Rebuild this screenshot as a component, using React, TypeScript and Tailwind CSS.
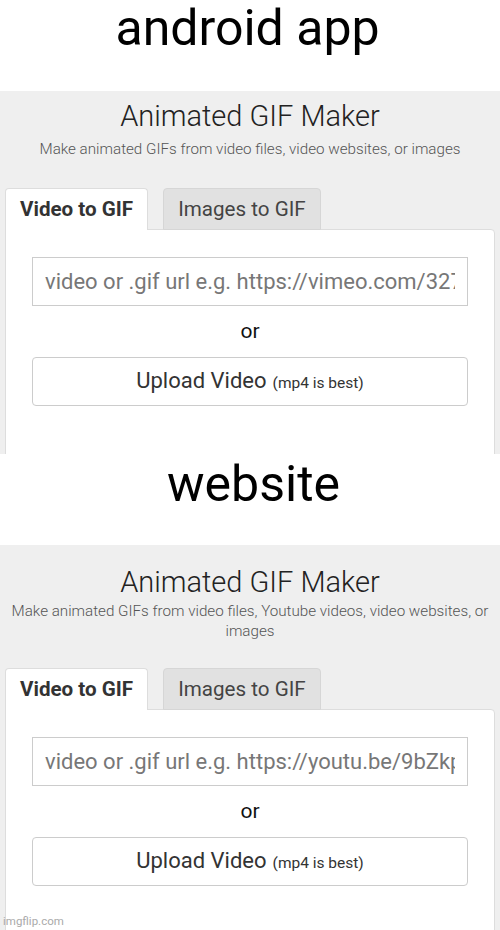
import React from "react";

const font = { fontFamily: "Roboto, 'Noto Sans', sans-serif" };

function Label({ text, pad }: { text: string; pad: string }) {
  return (
    <div className={`h-[91px] bg-white text-center text-[50px] leading-[50px] text-black ${pad}`}>
      {text}
    </div>
  );
}

function Maker({
  subtitle,
  placeholder,
  height,
  pt,
  subMt,
  tabsMt,
}: {
  subtitle: string;
  placeholder: string;
  height: string;
  pt: string;
  subMt: string;
  tabsMt: string;
}) {
  return (
    <section className={`${height} overflow-hidden bg-[#efefef] ${pt}`}>
      <h1 className="text-center text-[29px] font-light leading-[36px] text-[#222]">
        Animated GIF Maker
      </h1>
      <p className={`${subMt} px-[6px] text-center text-[15.2px] font-light leading-[20px] text-[#555]`}>
        {subtitle}
      </p>
      <div className={`${tabsMt} relative z-10 mx-[5px] -mb-px flex h-[42px] gap-[15px]`}>
        <div className="rounded-t-[4px] border border-b-0 border-[#dddddd] bg-white px-[14px] pt-2 text-[20.6px] font-bold leading-[24px] text-[#333]">
          Video to GIF
        </div>
        <div className="rounded-t-[4px] border border-[#d6d6d6] bg-[#e1e1e1] px-[14px] pt-2 text-[20.6px] leading-[24px] text-[#444]">
          Images to GIF
        </div>
      </div>
      <div className="mx-[5px] h-[400px] rounded-tr-[4px] border border-[#dddddd] bg-white px-[26px] pt-[27px]">
        <input
          readOnly
          placeholder={placeholder}
          className="block h-[49px] w-full border border-[#cccccc] bg-white px-[12px] text-[22px] text-[#333] outline-none placeholder:text-[#777]"
        />
        <div className="mt-[13px] text-center text-[21px] leading-[24px] text-[#111]">or</div>
        <div className="mt-[14px] flex h-[49px] items-center justify-center rounded-[4px] border border-[#cccccc] bg-white">
          <span className="flex items-baseline gap-[6px] text-[#333]">
            <span className="text-[22px] leading-[26px]">Upload Video</span>
            <span className="text-[15.5px] leading-[26px]">(mp4 is best)</span>
          </span>
        </div>
      </div>
    </section>
  );
}

export default function App() {
  return (
    <div className="relative h-[930px] w-[500px] overflow-hidden bg-white" style={font}>
      <Label text="android app" pad="pt-[3px] pr-[5px]" />
      <Maker
        subtitle="Make animated GIFs from video files, video websites, or images"
        placeholder="video or .gif url e.g. https://vimeo.com/327386395"
        height="h-[363px]"
        pt="pt-[7px]"
        subMt="mt-[5px]"
        tabsMt="mt-[29px]"
      />
      <Label text="website" pad="pt-[5px] pl-[7px]" />
      <Maker
        subtitle="Make animated GIFs from video files, Youtube videos, video websites, or images"
        placeholder="video or .gif url e.g. https://youtu.be/9bZkp7q19f0"
        height="h-[385px]"
        pt="pt-[19px]"
        subMt="mt-[1px]"
        tabsMt="mt-[27px]"
      />
      <div className="absolute bottom-[2px] left-[3px] text-[11.5px] leading-[14px] text-[#aaaaaa]">
        imgflip.com
      </div>
    </div>
  );
}
